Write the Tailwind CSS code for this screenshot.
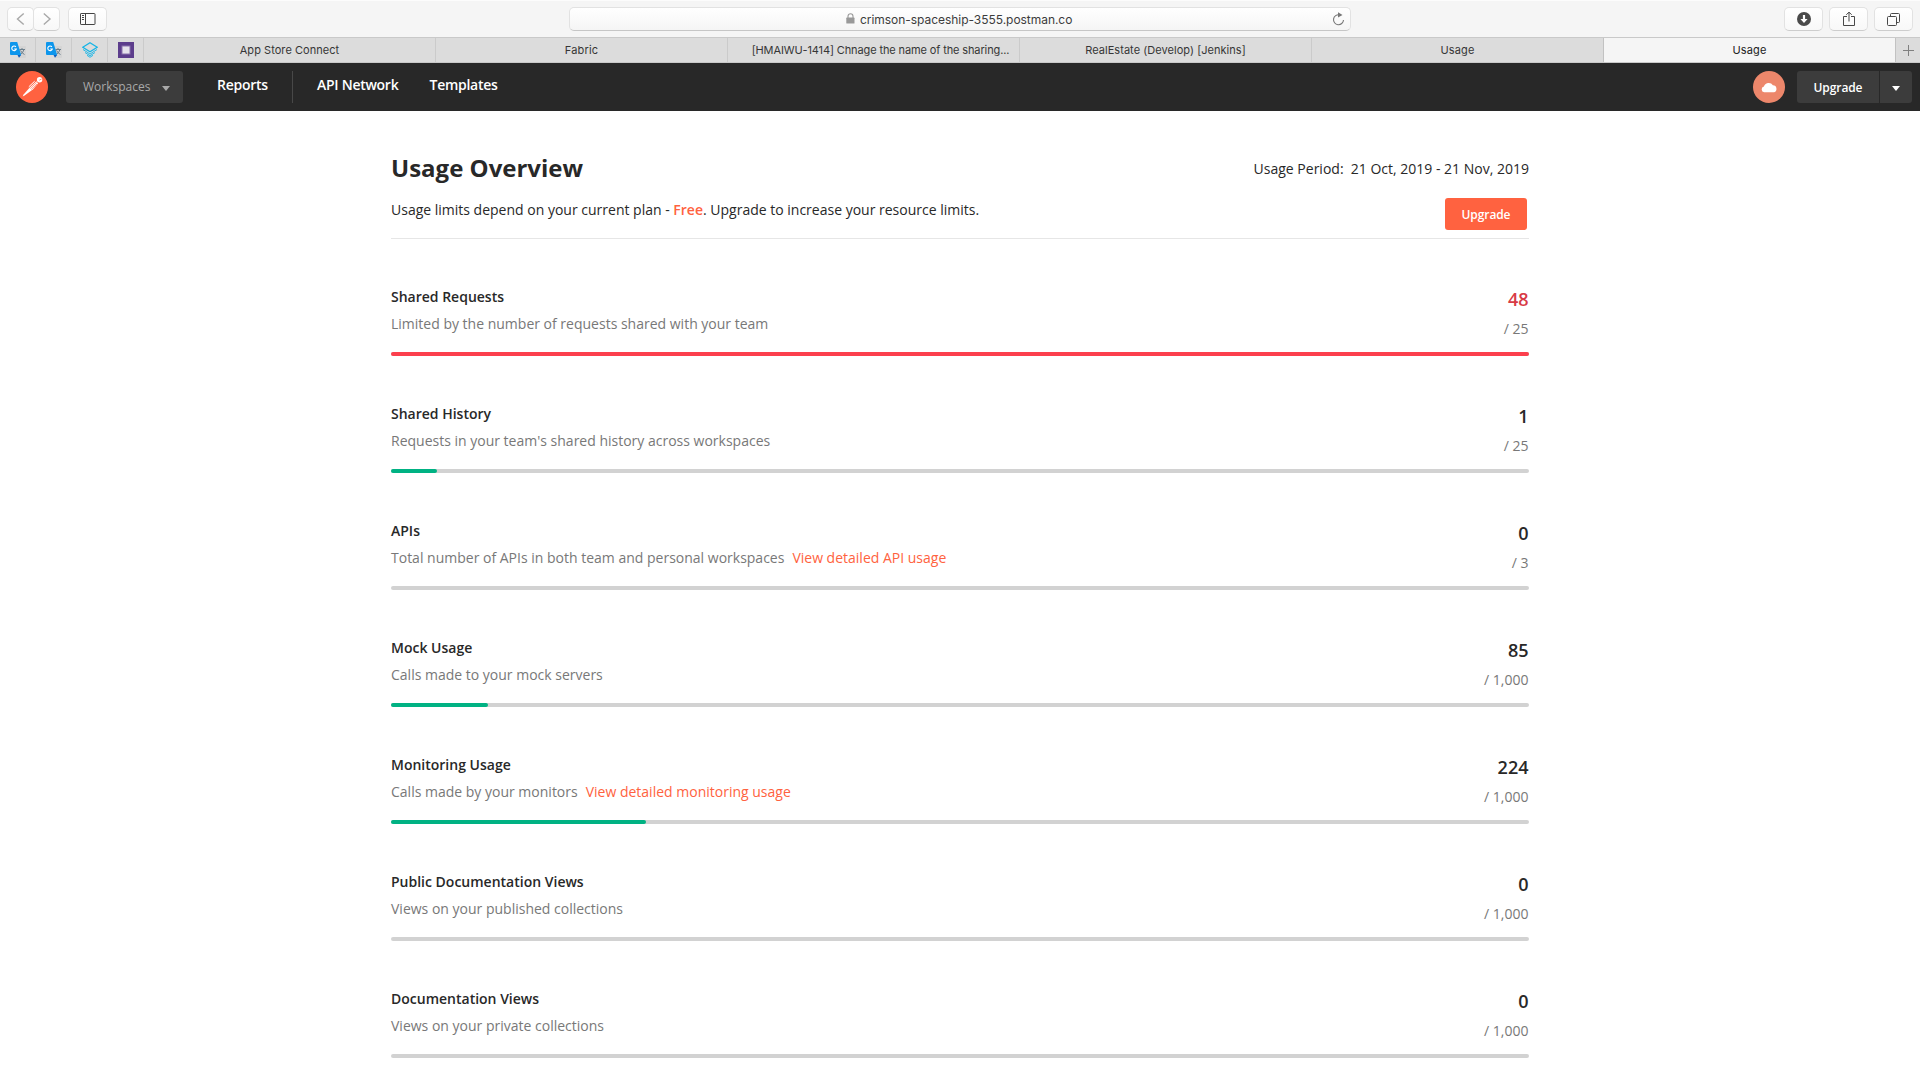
<!DOCTYPE html>
<html lang="en">
<head>
<meta charset="utf-8">
<title>Usage</title>
<script src="https://cdn.jsdelivr.net/npm/@tailwindcss/browser@4"></script>
</head>
<body class="w-[1920px] h-[1080px] overflow-hidden bg-white font-['Open_Sans',sans-serif] text-[#282828] text-sm/[20px]">

<!-- Browser toolbar -->
<div class="h-[37px] flex items-start bg-[#f5f5f5] border-t border-[#fcfcfc] pt-1.5 pl-[7px] pr-[7px] font-[Inter,sans-serif]">
  <div class="w-[27px] h-6 rounded-[5px] border border-[#e2e2e2] border-b-[#cdcdcd] bg-linear-to-b from-white to-[#f8f8f8] flex items-center justify-center">
    <svg class="w-3 h-3.5" viewBox="0 0 12 14" fill="none" stroke="#a8a8a8" stroke-width="1.4"><path d="M8.700 1.500 2.500 7l6.200 5.500"/></svg>
  </div>
  <div class="w-[27px] h-6 -ml-px rounded-[5px] border border-[#e2e2e2] border-b-[#cdcdcd] bg-linear-to-b from-white to-[#f8f8f8] flex items-center justify-center">
    <svg class="w-3 h-3.5" viewBox="0 0 12 14" fill="none" stroke="#a8a8a8" stroke-width="1.4"><path d="M2.800 1.500 9 7l-6.200 5.500"/></svg>
  </div>
  <div class="w-[39px] h-6 ml-2 rounded-[5px] border border-[#e2e2e2] border-b-[#cdcdcd] bg-linear-to-b from-white to-[#f8f8f8] flex items-center justify-center">
    <svg class="w-4 h-3" viewBox="0 0 16 12" fill="none" stroke="#444"><rect x=".5" y=".5" width="14.500" height="11" rx=".6"/><path d="M5.500 0v12M2 2.500h2M2 4.500h2M2 6.500h2"/></svg>
  </div>
  <div class="w-[782px] h-6 ml-[462px] rounded-[5px] border border-[#e2e2e2] border-b-[#c6c6c6] bg-linear-to-b from-white to-[#f5f5f5] flex items-center justify-between pl-[276px] pr-[5px]">
    <div class="flex items-center gap-[5px]">
      <svg class="w-[9px] h-[11px] -mt-px" viewBox="0 0 9 11"><path d="M2 5V3.200a2.500 2.500 0 0 1 5 0V5" fill="none" stroke="#999" stroke-width="1.100"/><rect x=".3" y="4.600" width="8.200" height="6" rx=".6" fill="#999"/></svg>
      <span class="text-[12px]/[20px] tracking-[-0.04px] text-[#3c3c3c] pt-px">crimson-spaceship-3555.postman.co</span>
    </div>
    <svg class="w-[13px] h-[14px] -mt-px" viewBox="0 0 13 14" fill="none" stroke="#777" stroke-width="1.100"><path d="M7.500 2.800A5 5 0 1 0 11.500 8"/><path d="M6 .3 10.500 2.900 6 5.500z" fill="#777" stroke="none"/></svg>
  </div>
  <div class="w-[39px] h-6 ml-auto rounded-[5px] border border-[#e2e2e2] border-b-[#cdcdcd] bg-linear-to-b from-white to-[#f8f8f8] flex items-center justify-center">
    <svg class="w-3.5 h-3.5" viewBox="0 0 14 14"><circle cx="7" cy="7" r="7" fill="#4a4a4a"/><path d="M5.900 3h2.200v4h2.500L7 11 3.400 7h2.500z" fill="#fff"/></svg>
  </div>
  <div class="w-[39px] h-6 ml-1.5 rounded-[5px] border border-[#e2e2e2] border-b-[#cdcdcd] bg-linear-to-b from-white to-[#f8f8f8] flex items-center justify-center">
    <svg class="w-3 h-4" viewBox="0 0 12 16" fill="none" stroke="#484848"><path d="M4 5.500H.5v9h11v-9H8M6 10.500V1.200M3.300 3.800 6 1.100l2.700 2.700"/></svg>
  </div>
  <div class="w-[39px] h-6 ml-1.5 rounded-[5px] border border-[#e2e2e2] border-b-[#cdcdcd] bg-linear-to-b from-white to-[#f8f8f8] flex items-center justify-center">
    <svg class="w-[13px] h-[13px]" viewBox="0 0 13 13" fill="none" stroke="#484848"><rect x=".5" y="3.500" width="9" height="9" rx="1"/><path d="M3.500 3.500v-2q0-1 1-1h7q1 0 1 1V8.500q0 1-1 1H9.500"/></svg>
  </div>
</div>

<!-- Tab strip -->
<div class="h-[26px] flex border-t border-b border-[#c9c9c9] bg-[#dcdcdc] font-[Inter,sans-serif] text-[11px]/[25px] tracking-[0.18px] text-[#363636] text-center">
  <div class="w-9 border-r border-[#cbcbcb] flex items-center justify-center shrink-0">
    <svg class="w-4 h-4" viewBox="0 0 16 16"><path d="M6 4h9q1 0 1 1v10q0 1-1 1H9z" fill="#d4d4d4"/><path d="M9.500 7.500H15M12 6v1.500M14 7.500q-1 3.500-3.800 5M10.500 8.500q1.500 2.800 4 4" fill="none" stroke="#6b7f8c"/><path d="M1 0h6.200l4 13H1q-1 0-1-1V1Q0 0 1 0" fill="#0d96ec"/><path d="M7.500 13h3.700L9 15.800z" fill="#0b5fc0"/><path d="M5.900 4.900A2.300 2.300 0 1 0 6.300 7H4.200" fill="none" stroke="#fff" stroke-width="1.100"/></svg>
  </div>
  <div class="w-9 border-r border-[#cbcbcb] flex items-center justify-center shrink-0">
    <svg class="w-4 h-4" viewBox="0 0 16 16"><path d="M6 4h9q1 0 1 1v10q0 1-1 1H9z" fill="#d4d4d4"/><path d="M9.500 7.500H15M12 6v1.500M14 7.500q-1 3.500-3.800 5M10.500 8.500q1.500 2.800 4 4" fill="none" stroke="#6b7f8c"/><path d="M1 0h6.200l4 13H1q-1 0-1-1V1Q0 0 1 0" fill="#0d96ec"/><path d="M7.500 13h3.700L9 15.800z" fill="#0b5fc0"/><path d="M5.900 4.900A2.300 2.300 0 1 0 6.300 7H4.200" fill="none" stroke="#fff" stroke-width="1.100"/></svg>
  </div>
  <div class="w-9 border-r border-[#cbcbcb] flex items-center justify-center shrink-0">
    <svg class="w-4 h-4" viewBox="0 0 16 16" fill="none" stroke="#14b4e6" stroke-width="1"><path d="M8 .8 15.200 5.200 8 9.800.8 5.200z" stroke-width="1.200"/><path d="M1 7.500 8 12l7-4.500M3 10.500 8 13.700l5-3.200M5 13.300 8 15.300l3-2" stroke-width=".9"/></svg>
  </div>
  <div class="w-9 border-r border-[#cbcbcb] flex items-center justify-center shrink-0">
    <svg class="w-4 h-4" viewBox="0 0 16 16"><path d="M0 0h16v16H0z" fill="#5c3d8c"/><path d="M3.500 3.500h9v9h-9z" fill="#8a72ac"/><path d="M4.500 4.500h7v7h-7z" fill="#e6e2ec"/></svg>
  </div>
  <div class="w-[292px] border-r border-[#cbcbcb] tracking-[0.05px]">App Store Connect</div>
  <div class="w-[292px] border-r border-[#cbcbcb]">Fabric</div>
  <div class="w-[292px] border-r border-[#cbcbcb] whitespace-nowrap tracking-[-0.12px] pl-[14px]">[HMAIWU-1414] Chnage the name of the sharing...</div>
  <div class="w-[292px] border-r border-[#cbcbcb] tracking-[0.04px]">RealEstate (Develop) [Jenkins]</div>
  <div class="w-[292px] border-r border-[#c2c2c2]">Usage</div>
  <div class="w-[292px] border-r border-[#c2c2c2] bg-[#f5f5f5] text-[#222]">Usage</div>
  <div class="flex-1 flex items-center justify-center">
    <svg class="w-[11px] h-[11px]" viewBox="0 0 11 11" stroke="#808080"><path d="M5.500 0v11M0 5.500h11"/></svg>
  </div>
</div>

<!-- Postman navigation -->
<nav class="h-12 bg-[#282828] flex items-center pl-4 pr-2 text-white">
  <svg class="w-8 h-8" viewBox="0 0 32 32"><circle cx="16" cy="16" r="16" fill="#ff6240"/><circle cx="23.600" cy="8.700" r="2.700" fill="#fff"/><path d="M23.300 9.200 25.600 8" stroke="#ff6240" stroke-width=".7"/><path d="M20.500 10.300 22 12.500 16.800 18.500 8.600 24.400 6.600 25.400 7.600 23.400 13.800 16.500z" fill="#fff"/><path d="M18.700 10.200 12.800 15.800" stroke="#fff" stroke-width="1"/><path d="M20.600 11.600 14.200 17.600M21 13 15.300 18.500" stroke="#ff6240" stroke-width=".6"/></svg>
  <div class="ml-[18px] w-[117px] h-8 rounded-[3px] bg-[#3c3c3c] flex items-center justify-between pl-[17px] pr-[13px] text-[12px] text-[#a9a9a9]">
    <span class="-mt-px">Workspaces</span>
    <svg class="w-2 h-[5px] mt-0.5" viewBox="0 0 8 5"><path d="M0 0h8L4 5z" fill="#a9a9a9"/></svg>
  </div>
  <div class="flex items-center font-semibold tracking-[-0.27px]">
    <a class="ml-[34px] w-[75px] -mt-1">Reports</a>
    <div class="w-px h-8 bg-[#484848]"></div>
    <a class="ml-6 w-[112.500px] -mt-1">API Network</a>
    <a class="-mt-1">Templates</a>
  </div>
  <div class="ml-auto w-8 h-8 rounded-full bg-[#ed876b] flex items-center justify-center">
    <svg class="w-4 h-[11px]" viewBox="0 0 16 11"><path d="M3.200 10.300a2.900 2.900 0 0 1-.3-5.700 5 5 0 0 1 9-1.400 3.600 3.600 0 0 1 .8 7.100z" fill="#fff"/></svg>
  </div>
  <div class="ml-3 w-[82px] h-8 rounded-l-[3px] bg-[#3c3c3c] text-[12px]/[33px] font-semibold text-center tracking-[-0.1px]">Upgrade</div>
  <div class="ml-px w-8 h-8 rounded-r-[3px] bg-[#3c3c3c] flex items-center justify-center">
    <svg class="w-2 h-[5px] mt-0.5" viewBox="0 0 8 5"><path d="M0 0h8L4 5z" fill="#fff"/></svg>
  </div>
</nav>

<main class="w-[1138px] ml-[391px] pt-10">
  <div class="h-[88px] border-b border-[#e6e6e6] flex justify-between">
    <div>
      <h1 class="pt-px text-2xl/[32px] font-bold">Usage Overview</h1>
      <p class="mt-4">Usage limits depend on your current plan - <b class="font-semibold text-[#ff6240]">Free</b>. Upgrade to increase your resource limits.</p>
    </div>
    <div class="flex flex-col items-end pt-2">
      <p>Usage Period:&nbsp; 21 Oct, 2019 - 21 Nov, 2019</p>
      <button class="mt-[19px] mr-0.5 w-[82px] h-8 shrink-0 rounded-[3px] bg-[#ff6240] text-white text-[12px]/[33px] font-semibold tracking-[-0.1px]">Upgrade</button>
    </div>
  </div>
  <div id="usage" class="mt-12 flex flex-col gap-12"></div>
</main>

<script>
const rows = [
  { title: "Shared Requests", desc: "Limited by the number of requests shared with your team", used: "48", limit: "25", pct: 100, over: true },
  { title: "Shared History", desc: "Requests in your team's shared history across workspaces", used: "1", limit: "25", pct: 4 },
  { title: "APIs", desc: "Total number of APIs in both team and personal workspaces", link: "View detailed API usage", used: "0", limit: "3", pct: 0 },
  { title: "Mock Usage", desc: "Calls made to your mock servers", used: "85", limit: "1,000", pct: 8.5 },
  { title: "Monitoring Usage", desc: "Calls made by your monitors", link: "View detailed monitoring usage", used: "224", limit: "1,000", pct: 22.4 },
  { title: "Public Documentation Views", desc: "Views on your published collections", used: "0", limit: "1,000", pct: 0 },
  { title: "Documentation Views", desc: "Views on your private collections", used: "0", limit: "1,000", pct: 0 },
];
document.getElementById("usage").innerHTML = rows.map(r => `
  <section class="h-[69px] flex flex-col justify-between">
    <div class="flex justify-between">
      <div>
        <h2 class="font-semibold">${r.title}</h2>
        <p class="mt-[7px] text-[#787878]">${r.desc}${r.link ? `<a class="ml-2 text-[#ff6240]">${r.link}</a>` : ""}</p>
      </div>
      <div class="text-right pr-[0.5px]">
        <p class="text-lg/[24px] font-semibold ${r.over ? "text-[#d83b46]" : "text-[#282828]"}">${r.used}</p>
        <p class="mt-2 text-[#787878]">/ ${r.limit}</p>
      </div>
    </div>
    <div class="h-1 rounded-sm bg-[#d2d2d2]">
      <div class="h-1 rounded-sm ${r.over ? "bg-[#fc3f4d]" : "bg-[#00b283]"}" style="width:${r.pct}%"></div>
    </div>
  </section>`).join("");
</script>
</body>
</html>
